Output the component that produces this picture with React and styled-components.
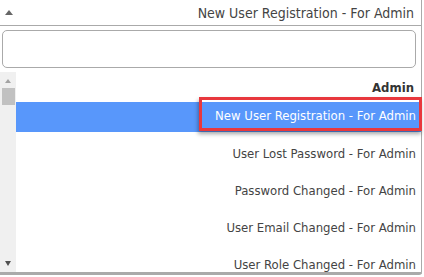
import React from "react";
import styled, { createGlobalStyle } from "styled-components";

const GlobalStyle = createGlobalStyle`
  body {
    margin: 0;
    background: #fff;
    overflow: hidden;
    font-family: "DejaVu Sans Condensed", "DejaVu Sans", sans-serif;
  }
`;

const options = [
  "User Lost Password - For Admin",
  "Password Changed - For Admin",
  "User Email Changed - For Admin",
  "User Role Changed - For Admin",
];

const Dropdown = styled.div`
  width: 422px;
  height: 275px;
  border-right: 1px solid #aaa;
  border-bottom: 3px solid #aaa;
  border-bottom-right-radius: 3px;
  box-sizing: border-box;
  display: flex;
  flex-direction: column;
`;

const Header = styled.div`
  height: 25px;
  border-bottom: 1px solid #aaa;
  display: flex;
  align-items: center;
  justify-content: space-between;
  padding: 0 7px 0 5px;
  color: #444;
  font-size: 14px;
  flex: none;
`;

const Caret = styled.span`
  width: 0;
  height: 0;
  border-left: 4px solid transparent;
  border-right: 4px solid transparent;
  border-bottom: 5px solid #666;
`;

const SearchBox = styled.div`
  padding: 4px 5px 4px 2px;
  flex: none;
`;

const SearchInput = styled.input`
  display: block;
  width: 100%;
  height: 38px;
  box-sizing: border-box;
  border: 1px solid #aaa;
  border-radius: 5px;
  outline: none;
`;

const ListArea = styled.div`
  flex: 1;
  display: flex;
  min-height: 0;
`;

const ScrollTrack = styled.div`
  width: 16px;
  background: #f0f0f0;
  display: flex;
  flex-direction: column;
  align-items: center;
  padding: 7px 0 6px;
  box-sizing: border-box;
`;

const UpArrow = styled.span`
  width: 0;
  height: 0;
  border-left: 3.5px solid transparent;
  border-right: 3.5px solid transparent;
  border-bottom: 4px solid #a3a3a3;
`;

const Thumb = styled.div`
  width: 13px;
  height: 17px;
  background: #c1c1c1;
  margin-top: 5px;
`;

const DownArrow = styled.span`
  margin-top: auto;
  width: 0;
  height: 0;
  border-left: 3.5px solid transparent;
  border-right: 3.5px solid transparent;
  border-top: 5px solid #505050;
`;

const Options = styled.ul`
  flex: 1;
  margin: 0;
  padding: 0;
  list-style: none;
`;

const GroupLabel = styled.li`
  height: 30px;
  display: flex;
  align-items: center;
  justify-content: flex-end;
  padding-right: 7px;
  font-size: 13px;
  font-weight: bold;
  color: #333;
`;

const Option = styled.li`
  height: ${(p) => (p.$active ? "30px" : "37px")};
  margin-bottom: ${(p) => (p.$active ? "3px" : "0")};
  display: flex;
  align-items: center;
  justify-content: flex-end;
  padding-right: 5px;
  font-size: 13px;
  color: ${(p) => (p.$active ? "#fff" : "#444")};
  background: ${(p) => (p.$active ? "#5897fb" : "transparent")};
`;

const Highlight = styled.span`
  position: relative;
  top: -3px;
  display: block;
  line-height: 15px;
  padding: 8px 3px 5px 13px;
  margin-right: -6px;
  border: 3px solid #e8383d;
  box-shadow: -1px 3px 4px rgba(0, 0, 0, 0.35);
`;

export default function App() {
  return (
    <>
      <GlobalStyle />
      <Dropdown>
        <Header>
          <Caret />
          <span>New User Registration - For Admin</span>
        </Header>
        <SearchBox>
          <SearchInput type="text" />
        </SearchBox>
        <ListArea>
          <ScrollTrack>
            <UpArrow />
            <Thumb />
            <DownArrow />
          </ScrollTrack>
          <Options>
            <GroupLabel>Admin</GroupLabel>
            <Option $active>
              <Highlight>New User Registration - For Admin</Highlight>
            </Option>
            {options.map((o) => (
              <Option key={o}>{o}</Option>
            ))}
          </Options>
        </ListArea>
      </Dropdown>
    </>
  );
}
